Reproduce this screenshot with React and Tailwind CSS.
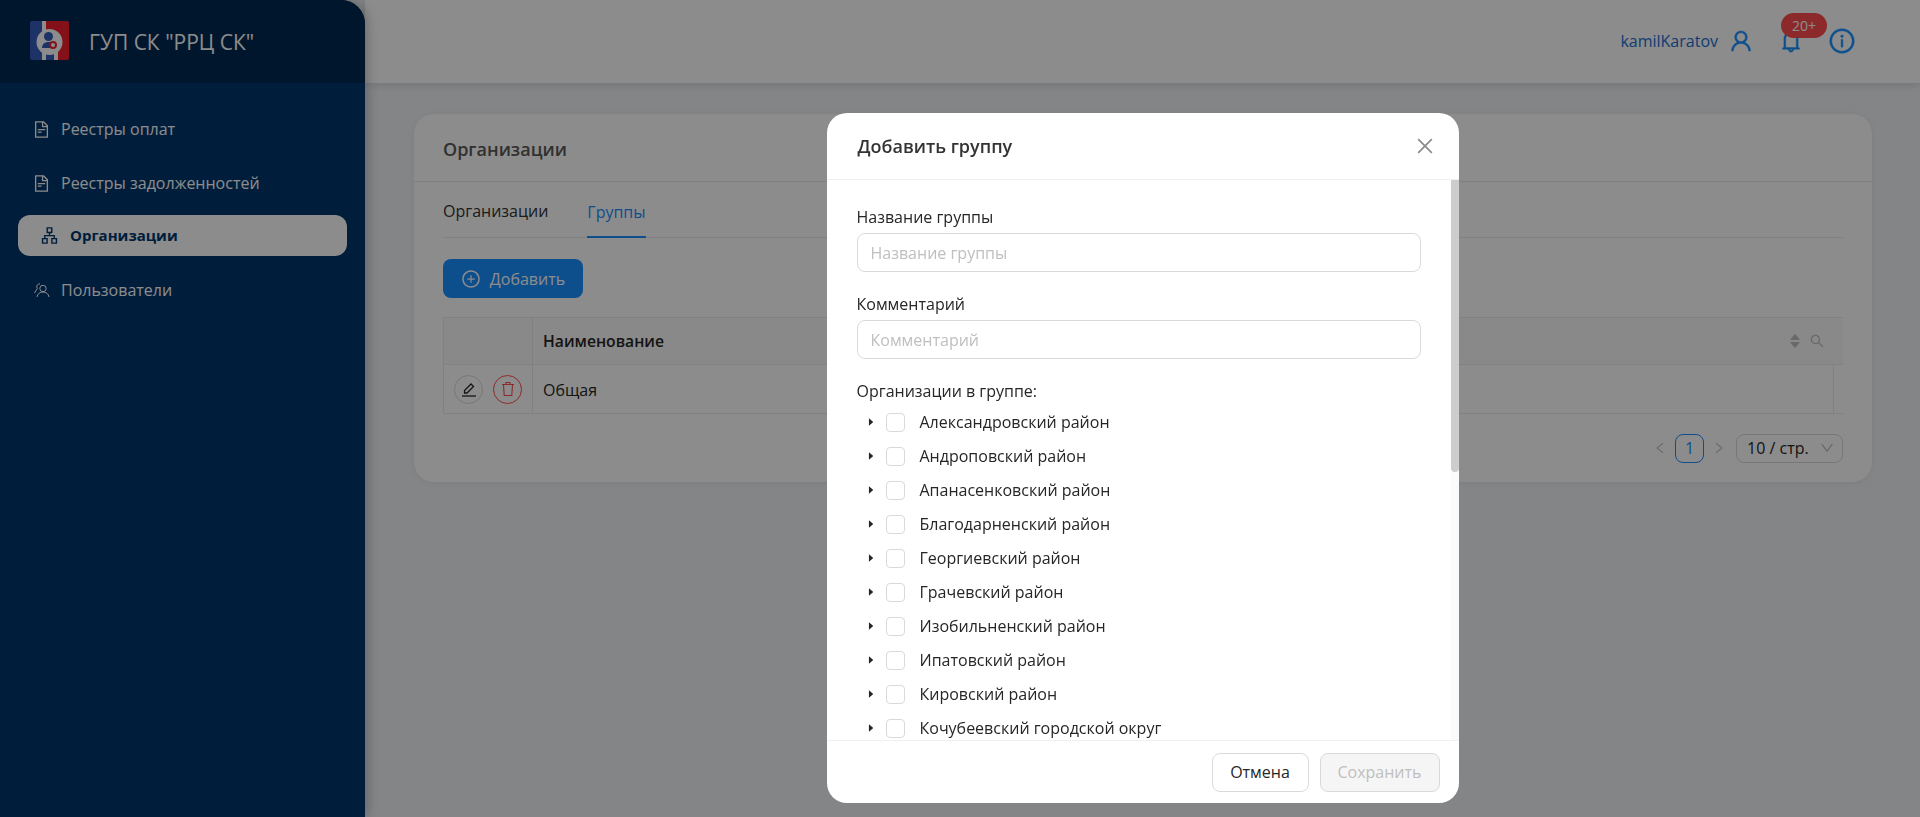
import {
    AiOutlineApartment,
    AiOutlineBell,
    AiOutlineClose,
    AiOutlineDown,
    AiOutlineFileText,
    AiOutlineInfoCircle,
    AiOutlineLeft,
    AiOutlinePlusCircle,
    AiOutlineRight,
    AiOutlineSearch,
    AiOutlineUser,
    AiFillCaretDown,
    AiFillCaretRight,
    AiFillCaretUp,
} from "react-icons/ai";

const districts = [
    "Александровский район",
    "Андроповский район",
    "Апанасенковский район",
    "Благодарненский район",
    "Георгиевский район",
    "Грачевский район",
    "Изобильненский район",
    "Ипатовский район",
    "Кировский район",
    "Кочубеевский городской округ",
];

function Logo() {
    return (
        <svg width="39" height="39" viewBox="0 0 39 39" className="-mt-[2px] shrink-0">
            <rect width="39" height="39" rx="2" fill="#355bbb" />
            <path d="M16 0h21a2 2 0 0 1 2 2v35a2 2 0 0 1-2 2H28V30H16z" fill="#f02030" />
            <path d="M12 0h4v39h-4z" fill="#fff" />
            <path d="M24 30h4v9h-4z" fill="#fff" />
            <circle cx="19.5" cy="21" r="13" fill="#fff" />
            <circle cx="18.500" cy="15.500" r="4.500" fill="#355bbb" />
            <path d="M12 27c0-4 3-6 6.500-6 2 0 4 .6 5 2v4z" fill="#355bbb" />
            <circle cx="23" cy="24" r="3" fill="#fff" stroke="#f02030" strokeWidth="2" />
        </svg>
    );
}

function UsersIcon() {
    return (
        <svg width="19" height="16" viewBox="-1.5 0 19 16" fill="none" stroke="currentColor" strokeWidth="1" className="shrink-0">
            <circle cx="9.5" cy="6.5" r="3.2" />
            <path d="M3.5 15c.4-3 2.8-5 6-5s5.600 2 6 5" />
            <path d="M6.500 1.800A3 3 0 0 0 3.800 6.500L1 11" />
        </svg>
    );
}

function NavItem({ icon, label }) {
    return (
        <div className="flex h-[54px] items-center gap-[10px] pl-[32px] text-[16px] text-white">
            {icon}
            <span>{label}</span>
        </div>
    );
}

function Sidebar() {
    return (
        <aside className="relative z-10 flex w-[365px] shrink-0 flex-col overflow-hidden rounded-tr-[24px] bg-[#00376e] shadow-[2px_0_12px_rgba(0,0,0,0.25)]">
            <div className="flex h-[83px] items-center gap-[20px] bg-[#002850] pl-[30px]">
                <Logo />
                <span className="mt-[2px] text-[21px] text-white">ГУП СК "РРЦ СК"</span>
            </div>
            <nav className="flex flex-col pt-[19px]">
                <NavItem icon={<AiOutlineFileText size={19} />} label="Реестры оплат" />
                <NavItem icon={<AiOutlineFileText size={19} />} label="Реестры задолженностей" />
                <div className="mx-[18px] mt-[5px] flex h-[41px] items-center gap-[11px] rounded-[12px] bg-white pl-[22px] text-[15px] font-bold text-[#00376e]">
                    <AiOutlineApartment size={19} />
                    <span>Организации</span>
                </div>
                <div className="mt-[7px]">
                    <NavItem icon={<UsersIcon />} label="Пользователи" />
                </div>
            </nav>
        </aside>
    );
}

function Header() {
    return (
        <header className="flex h-[83px] shrink-0 items-center justify-end bg-white pb-[2px] pr-[64px] shadow-[0_2px_8px_rgba(0,0,0,0.12)]">
            <span className="text-[16px] text-[#1a6fd0]">kamilKaratov</span>
            <AiOutlineUser size={26} className="ml-[10px] stroke-[16] text-[#1890ff]" />
            <div className="relative ml-[24px] text-[#1890ff]">
                <AiOutlineBell size={26} className="stroke-[16]" />
                <span className="absolute -top-[15px] -right-[23px] flex h-[25px] w-[46px] items-center justify-center rounded-full bg-[#ff4d4f] text-[14px] text-white">
                    20+
                </span>
            </div>
            <AiOutlineInfoCircle size={28} className="ml-[24px] stroke-[16] text-[#1890ff]" />
        </header>
    );
}

function GroupsCard() {
    return (
        <section className="rounded-[20px] bg-white shadow-[0_1px_6px_rgba(0,0,0,0.06)]">
            <div className="flex h-[68px] items-center border-b border-[#e8e8e8] px-[29px] pt-[4px] text-[18px] font-semibold text-[#595959]">
                Организации
            </div>
            <div className="px-[29px]">
                <div className="flex h-[56px] items-end gap-[39px] border-b border-[#ececec] text-[16px]">
                    <span className="pb-[14px] text-[#333]">Организации</span>
                    <span className="-mb-px border-b-2 border-[#1890ff] pb-[12px] text-[#1890ff]">Группы</span>
                </div>
                <button className="mt-[21px] flex h-[39px] w-[140px] items-center justify-center gap-[9px] rounded-[8px] bg-[#1890ff] text-[16px] text-white">
                    <AiOutlinePlusCircle size={20} />
                    Добавить
                </button>
                <div className="mt-[19px] border-y border-l border-[#ebebeb] text-[16px] text-[#262626]">
                    <div className="flex h-[46px] items-center bg-[#fafafa]">
                        <div className="h-full w-[89px] border-r border-[#ebebeb]" />
                        <span className="ml-[10px] mt-[1px] text-[15.7px] font-semibold">Наименование</span>
                        <div className="ml-auto mr-[18px] flex items-center gap-[7px] text-[#bfbfbf]">
                            <span className="flex flex-col">
                                <AiFillCaretUp size={14} className="-mb-[3px]" />
                                <AiFillCaretDown size={14} className="-mt-[3px]" />
                            </span>
                            <AiOutlineSearch size={16} />
                        </div>
                    </div>
                    <div className="flex h-[49px] items-center border-t border-[#ebebeb]">
                        <div className="flex h-full w-[89px] items-center gap-[10px] border-r border-[#ebebeb] pl-[10px]">
                            <span className="flex h-[29px] w-[29px] items-center justify-center rounded-full border border-[#d9d9d9] text-[#262626]">
                                <svg width="16" height="16" viewBox="0 0 16 16" fill="none" stroke="currentColor">
                                    <path d="M1 15h14" strokeWidth="1.300" />
                                    <path d="M3.500 12v-2.500L10 3l2.500 2.500L6 12z" strokeWidth="1.300" />
                                </svg>
                            </span>
                            <span className="flex h-[29px] w-[29px] items-center justify-center rounded-full border border-[#ff4d4f] text-[#ff4d4f]">
                                <svg width="16" height="16" viewBox="0 0 16 16" fill="none" stroke="currentColor" strokeWidth="1.100">
                                    <path d="M2 3.500h12M6 3.500V1.500h4v2M3.500 3.500l.7 11h7.600l.7-11" />
                                </svg>
                            </span>
                        </div>
                        <span className="ml-[10px] mt-[1px]">Общая</span>
                        <div className="ml-auto h-full w-[10px] border-l border-[#ebebeb]" />
                    </div>
                </div>
                <div className="flex h-[68px] items-center justify-end text-[#bfbfbf]">
                    <AiOutlineLeft size={14} />
                    <span className="ml-[8px] flex h-[29px] w-[29px] items-center justify-center rounded-[8px] border border-[#1890ff] text-[16px] text-[#1890ff]">
                        1
                    </span>
                    <AiOutlineRight size={14} className="ml-[8px]" />
                    <div className="ml-[10px] flex h-[29px] w-[107px] items-center justify-between rounded-[8px] border border-[#d9d9d9] pl-[10px] pr-[7px] text-[16px] text-[#262626]">
                        10 / стр.
                        <AiOutlineDown size={16} className="text-[#bfbfbf]" />
                    </div>
                </div>
            </div>
        </section>
    );
}

function Field({ label, className }) {
    return (
        <div className={className}>
            <div className="h-[20px] text-[16px] leading-[20px] text-[#262626]">{label}</div>
            <input
                readOnly
                placeholder={label}
                className="mt-[6px] block h-[39px] w-full rounded-[8px] border border-[#d9d9d9] px-[13px] text-[16px] outline-none placeholder:text-[#bfbfbf]"
            />
        </div>
    );
}

function GroupModal() {
    return (
        <div className="fixed inset-0 z-20 flex justify-center bg-black/45 pl-[365px] pt-[113px]">
            <div className="flex h-[690px] w-[632px] flex-col overflow-hidden rounded-[20px] bg-white">
                <div className="flex h-[67px] shrink-0 items-center justify-between border-b border-[#f0f0f0] pl-[31px] pr-[23px]">
                    <span className="text-[18px] font-semibold text-[#333]">Добавить группу</span>
                    <AiOutlineClose size={22} className="text-[#8c8c8c]" />
                </div>
                <div className="relative min-h-0 flex-1 overflow-hidden">
                    <div className="absolute inset-y-0 right-0 w-[8px] bg-[#fafafa]">
                        <div className="h-[292px] rounded-b-[4px] bg-[#cdcdcd]" />
                    </div>
                    <div className="pl-[30px] pr-[38px] pt-[27px]">
                        <Field label="Название группы" />
                        <Field label="Комментарий" className="mt-[22px]" />
                        <div className="mt-[22px] h-[20px] text-[16px] leading-[20px] text-[#262626]">Организации в группе:</div>
                        <ul className="mt-[4px]">
                            {districts.map((name) => (
                                <li key={name} className="flex h-[34px] items-center text-[16px] text-[#262626]">
                                    <AiFillCaretRight size={10} className="ml-[9px] text-[#262626]" />
                                    <span className="ml-[10px] h-[19px] w-[19px] rounded-[4px] border border-[#d9d9d9] bg-white" />
                                    <span className="ml-[15px]">{name}</span>
                                </li>
                            ))}
                        </ul>
                    </div>
                </div>
                <div className="flex h-[63px] shrink-0 items-center justify-end gap-[11px] border-t border-[#f0f0f0] pr-[19px] text-[16px]">
                    <button className="h-[39px] w-[97px] rounded-[8px] border border-[#d9d9d9] bg-white text-[#262626]">Отмена</button>
                    <button className="h-[39px] w-[120px] rounded-[8px] border border-[#d9d9d9] bg-[#f5f5f5] text-[#bfbfbf]">Сохранить</button>
                </div>
            </div>
        </div>
    );
}

export default function App() {
    return (
        <div className="flex h-screen overflow-hidden bg-[#f0f2f5] font-['Open_Sans','Noto_Sans',sans-serif]">
            <Sidebar />
            <div className="flex min-w-0 flex-1 flex-col">
                <Header />
                <main className="pl-[49px] pr-[48px] pt-[31px]">
                    <GroupsCard />
                </main>
            </div>
            <GroupModal />
        </div>
    );
}
